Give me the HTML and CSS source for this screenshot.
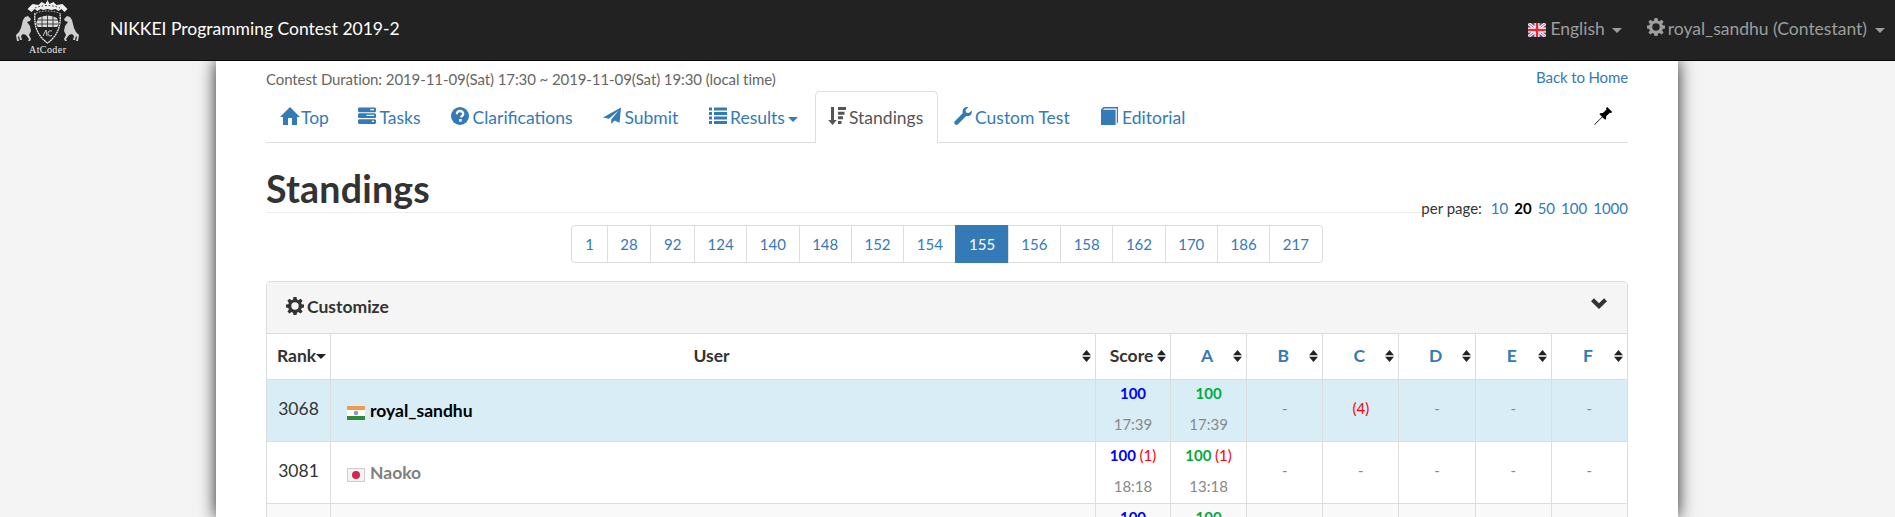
FILE: index.html
```html
<!DOCTYPE html>
<html lang="en">
<head>
<meta charset="utf-8">
<title>Standings - NIKKEI Programming Contest 2019-2</title>
<link rel="stylesheet" href="styles.css">
</head>
<body>
<svg class="sprite" aria-hidden="true">
  <symbol id="cog" viewBox="0 0 18 18"><path fill-rule="evenodd" d="M7.5 0h3l.5 2.6 1.3.6L14.600 1.700l2 2-1.500 2.200.6 1.300 2.300.4v3l-2.300.5-.6 1.300 1.500 2.200-2 2-2.300-1.500-1.300.6-.5 2.300h-3L7 15.700l-1.300-.6-2.300 1.500-2-2 1.500-2.200-.6-1.300L0 10.600v-3l2.300-.4.6-1.300-1.500-2.200 2-2 2.300 1.500L7 2.600zM9 5.300a3.700 3.700 0 1 0 0 7.400a3.700 3.700 0 0 0 0-7.400z"/></symbol>
  <symbol id="home" viewBox="0 0 20 18"><path d="M10 0 20 10h-3v8h-5v-7H8v7H3v-8H0z"/></symbol>
  <symbol id="tasks" viewBox="0 0 19 18"><path fill-rule="evenodd" d="M1 0h17l1 1v3l-1 1H1L0 4V1zM13 1.500v1.300h4V1.500zM1 6.200h17l1 1v3l-1 1H1l-1-1v-3zM9 7.800v1.300h8V7.800zM1 12.400h17l1 1v3l-1 1H1l-1-1v-3zM14.500 14v1.300H17V14z"/></symbol>
  <symbol id="question" viewBox="0 0 18 18"><circle cx="9" cy="9" r="9"/><path d="M5.900 7.300C5.800 4.900 7 4 9 4s3.300 1.100 3.200 2.900c0 1.900-2 2-2.100 3.500" fill="none" stroke="#fff" stroke-width="2.300"/><path d="M8 12h2.700v2.600H8z" fill="#fff"/></symbol>
  <symbol id="send" viewBox="0 0 19 18"><path d="M19 0 17.500 16l-5.300-2.300L8.700 17.500v-4.700L16.500 3.300 6.300 12 0 10.500z"/></symbol>
  <symbol id="list" viewBox="0 0 18 18"><path d="M0 .5h3v3H0zM0 5h3v3H0zM0 9.500h3v3H0zM0 14h3v3H0zM5 .5h13v3H5zM5 5h13v3H5zM5 9.500h13v3H5zM5 14h13v3H5z"/></symbol>
  <symbol id="sort" viewBox="0 0 18 18"><path d="M3 0h3v13h2.800L4.500 18 .2 13H3zM10 0h8v3h-8zM10 4.700h6.500v3H10zM10 9.300h5v3h-5zM10 14h3.500v3H10z"/></symbol>
  <symbol id="wrench" viewBox="0 0 18 18"><path d="M17.800 3.800c.6 3.800-2 6-5.600 5.200L4 17.300c-1.800 2-5-.9-3.200-3L8.700 6.200C7.900 2.300 10.400-.6 14.300.2L11.600 3l.4 2.500 2.700.6z"/></symbol>
  <symbol id="book" viewBox="0 0 18 18"><path d="M2.500 0H17v15.500l-1.200 1V1.500H3L2 2.800h12.600V18H0V2.500z"/></symbol>
  <symbol id="pin" viewBox="0 0 18 18"><path d="m13.200 0 5 5-1.100 1.100-1.300-.4-3.700 3.600c.4 1.500.1 2.500-.9 3.500L8.300 10.200 1.200 17.500.2 18l.5-1.100L8 9.800 5.300 7c1-1 2.200-1.200 3.600-.9L12.500 2.500l-.5-1.300z"/></symbol>
  <symbol id="down" viewBox="0 0 16 11"><path d="M0 3.300 3 .3l5 4.900 5-4.900 3 3L8 11z"/></symbol>
  <symbol id="updown" viewBox="0 0 9 12"><path d="M4.500 0 9 5.300H0zM0 6.800h9L4.500 12z"/></symbol>
  <symbol id="horse" viewBox="0 0 17 27"><path d="m12 1 3 3-1 2-3 1 3 4 1 5-2 4 2 4-1 2h-2l1-2-3-4-3-1-2 2 1 4H4l-1-4-1 1 1 4H1l-1-6 3-3 2-4 1-4 1-4 2-3z"/></symbol>
</svg>

<header class="navbar">
  <svg class="logo" viewBox="0 0 64 54">
    <g fill="#eee">
      <path d="m31.500 0 2 4 4-2 3 3 6-1 5 5-3 3-3-3-3 2-3-2-4 1-4-1-4 1-3-1-3 2-3-2-3 3-4-3 5-5 6 1 3-3 4 2z"/>
      <use href="#horse" x="0" y="15" width="17" height="27" opacity=".85"/>
      <use href="#horse" transform="matrix(-1 0 0 1 63 15)" width="17" height="27" opacity=".85"/>
      <path d="M22 18q9.500-5 19 0l2 6-2 3H22l-2-3z" opacity=".9"/>
    </g>
    <path d="M19 13q-2 20 12.500 30Q46 33 44 13" fill="none" stroke="#eee" stroke-width="1.300" stroke-dasharray="2 .5"/>
    <path d="M19 8q12.500-5 25 0" fill="none" stroke="#222" stroke-dasharray="1.500 2"/>
    <path d="M20 13q11.500-4 23 0" fill="none" stroke="#ccc" stroke-dasharray="1.500 1.500"/>
    <path d="M26 15v12M31.500 14v13M37 15v12M20 20h24M20 24h24" stroke="#222" stroke-width=".8"/>
    <path d="m27 36 3-6 1 6m5-5q-4-1-4 2.500t4 2" fill="none" stroke="#ccc"/>
    <text x="13" y="53" textLength="37" lengthAdjust="spacing">AtCoder</text>
  </svg>
  <a class="contest">NIKKEI Programming Contest 2019-2</a>
  <nav class="account">
    <a class="lang"><svg class="flag" viewBox="0 0 18 14"><path fill="#3855a5" d="M0 0h18v14H0z"/><path d="m0 0 18 14M18 0 0 14" stroke="#fff" stroke-width="3"/><path d="m0 0 18 14M18 0 0 14" stroke="#e04848" stroke-width="1"/><path d="M9 0v14M0 7h18" stroke="#fff" stroke-width="5"/><path d="M9 0v14M0 7h18" stroke="#e02b36" stroke-width="2.600"/></svg>English<i class="caret"></i></a>
    <a class="who"><svg class="icon"><use href="#cog"/></svg>royal_sandhu (Contestant)<i class="caret"></i></a>
  </nav>
</header>

<main class="page">
  <div class="meta"><span class="duration">Contest Duration: 2019-11-09(Sat) 17:30 ~ 2019-11-09(Sat) 19:30 (local time)</span><a class="back">Back to Home</a></div>
  <nav class="tabs">
    <a class="tab top"><svg class="icon home"><use href="#home"/></svg>Top</a>
    <a class="tab tasks"><svg class="icon"><use href="#tasks"/></svg>Tasks</a>
    <a class="tab clar"><svg class="icon"><use href="#question"/></svg>Clarifications</a>
    <a class="tab submit"><svg class="icon"><use href="#send"/></svg>Submit</a>
    <a class="tab results"><svg class="icon"><use href="#list"/></svg>Results<i class="caret"></i></a>
    <a class="tab active"><svg class="icon"><use href="#sort"/></svg>Standings</a>
    <a class="tab custom"><svg class="icon"><use href="#wrench"/></svg>Custom Test</a>
    <a class="tab editorial"><svg class="icon"><use href="#book"/></svg>Editorial</a>
    <svg class="icon pin"><use href="#pin"/></svg>
  </nav>
  <div class="heading"><h2>Standings</h2><div class="per"><span>per page:</span><a>10</a><b>20</b><a>50</a><a>100</a><a>1000</a></div></div>
  <div class="pages"><a>1</a><a>28</a><a>92</a><a>124</a><a>140</a><a>148</a><a>152</a><a>154</a><a class="current">155</a><a>156</a><a>158</a><a>162</a><a>170</a><a>186</a><a>217</a></div>
  <section class="panel">
    <div class="customize"><svg class="icon"><use href="#cog"/></svg><span>Customize</span><svg class="chev"><use href="#down"/></svg></div>
    <table>
      <colgroup><col class="c-rank"><col class="c-user"><col class="c-score"><col class="c-task"><col class="c-task"><col class="c-task"><col class="c-task"><col class="c-task"><col class="c-task"></colgroup>
      <thead><tr>
        <th><div class="th rank">Rank<i class="caret"></i></div></th>
        <th><div class="th"><span>User</span><svg><use href="#updown"/></svg></div></th>
        <th><div class="th"><span>Score</span><svg><use href="#updown"/></svg></div></th>
        <th><div class="th"><a>A</a><svg><use href="#updown"/></svg></div></th>
        <th><div class="th"><a>B</a><svg><use href="#updown"/></svg></div></th>
        <th><div class="th"><a>C</a><svg><use href="#updown"/></svg></div></th>
        <th><div class="th"><a>D</a><svg><use href="#updown"/></svg></div></th>
        <th><div class="th"><a>E</a><svg><use href="#updown"/></svg></div></th>
        <th><div class="th"><a>F</a><svg><use href="#updown"/></svg></div></th>
      </tr></thead>
      <tbody>
        <tr class="me"><td class="num">3068</td><td class="user"><svg class="flag" viewBox="0 0 18 14"><path fill="#fff" d="M0 0h18v14H0z"/><path fill="#f29a4a" d="M0 0h18v4H0z"/><path fill="#2f8a35" d="M0 10h18v4H0z"/><circle cx="9" cy="7" r="2.200" fill="#8f93d0"/></svg>royal_sandhu</td>
          <td><p class="pt total">100</p><p>17:39</p></td><td><p class="pt ac">100</p><p>17:39</p></td><td class="mid">-</td><td class="mid wa">(4)</td><td class="mid">-</td><td class="mid">-</td><td class="mid">-</td></tr>
        <tr><td class="num">3081</td><td class="user gray"><svg class="flag" viewBox="0 0 18 14"><path fill="#f3f3f3" stroke="#ccc" d="M.5.500h17v13H.5z"/><circle cx="9" cy="7" r="4" fill="#d0284d"/></svg>Naoko</td>
          <td><p class="pt total">100 <span class="wa">(1)</span></p><p>18:18</p></td><td><p class="pt ac">100 <span class="wa">(1)</span></p><p>13:18</p></td><td class="mid">-</td><td class="mid">-</td><td class="mid">-</td><td class="mid">-</td><td class="mid">-</td></tr>
        <tr class="odd"><td></td><td></td><td><p class="pt total">100</p><p></p></td><td><p class="pt ac">100</p><p></p></td><td></td><td></td><td></td><td></td><td></td></tr>
      </tbody>
    </table>
  </section>
</main>
</body>
</html>
```
FILE: styles.css
```css
* { box-sizing: border-box; }
html, body { margin: 0; height: 517px; overflow: hidden; }
body { background: #f4f4f4; color: #333; font: 17.5px/25px Lato, sans-serif; }
a { color: #337ab7; }
p { margin: 0; }
.sprite { position: absolute; width: 0; height: 0; }
.icon { width: 18px; height: 18px; fill: currentColor; flex: none; }
.caret { border: 5px solid transparent; border-top-color: currentColor; border-bottom: 0; flex: none; }

.navbar { position: relative; z-index: 1; display: flex; height: 61px; background: #222; border-bottom: 1px solid #080808; padding: 0 10px 0 16px; }
.logo { width: 64px; height: 54px; }
.logo text { font: 10px "Liberation Serif", serif; fill: #eee; }
.contest { color: #fff; margin: 16px auto 0 30px; white-space: nowrap; }
.account { display: flex; padding-top: 16px; }
.account a { display: flex; color: #9d9d9d; white-space: nowrap; }
.account .caret { margin: 12px 0 0 8px; }
.lang .caret { margin-left: 7px; }
.flag { width: 18px; height: 14px; flex: none; }
.lang .flag { margin: 7px 4px 0 0; }
.who { margin-left: 25px; }
.who .icon { margin: 2px 3px 0 0; }

.page { width: 1462px; height: 456px; margin: 0 auto 0 216px; padding: 0 50px; background: #fff; box-shadow: 0 0 16px #222; overflow: hidden; }
.meta { display: flex; justify-content: space-between; height: 30px; font-size: 15px; line-height: 18px; color: #666; padding-top: 9px; }
.duration { letter-spacing: -.09px; }
.back { margin-top: -2px; letter-spacing: -.12px; }

.tabs { display: flex; height: 52px; border-bottom: 1px solid #ddd; }
.tab { display: flex; flex: none; height: 52px; padding: 13px 0 0 12.500px; border: 1px solid transparent; border-radius: 5px 5px 0 0; white-space: nowrap; }
.tab .icon { margin: 2px 3.500px 0 0; }
.tab .home { width: 20px; margin-right: 1.500px; }
.tab .caret { margin: 12px 0 0 3px; }
.top { width: 78.500px; }
.tasks { width: 93px; }
.clar { width: 152px; }
.submit { width: 105.500px; }
.results { width: 120px; }
.active { width: 123px; margin-right: 2px; padding-left: 12px; background: #fff; color: #555; border-color: #ddd; border-bottom-color: #fff; }
.active .icon { margin-right: 3px; }
.custom { width: 147px; }
.pin { margin: 16px 16px 0 auto; color: #000; }

.heading { display: flex; justify-content: space-between; height: 70px; border-bottom: 1px solid #eee; }
h2 { margin: 25px 0 0; font-size: 37.5px; line-height: 41px; letter-spacing: .2px; }
.per { display: flex; height: 24px; margin-top: 53px; background: #fff; font-size: 15px; line-height: 24px; gap: 6px; }
.per span { margin-right: 3px; }
.per b { color: #000; }

.pages { display: flex; width: max-content; height: 38px; margin: 12px auto 0; border: 1px solid #ddd; border-radius: 4px; font-size: 15px; line-height: 36px; }
.pages a { padding: 0 12.600px; border-left: 1px solid #ddd; }
.pages a:first-child { border-left: 0; padding: 0 12.800px; }
.pages .current { background: #337ab7; color: #fff; margin: -1px 0; line-height: 38px; border-color: #337ab7; }

.panel { margin-top: 18px; border: 1px solid #ddd; border-bottom: 0; border-radius: 5px 5px 0 0; }
.customize { display: flex; height: 51px; padding: 12px 19px 0; background: #f5f5f5; border-radius: 4px 4px 0 0; font-weight: bold; }
.customize .icon { margin: 3px 3px 0 0; }
.chev { width: 16px; height: 11px; margin: 4px 1px 0 auto; fill: #333; }
table { width: 1362px; margin-left: -1px; table-layout: fixed; border-collapse: collapse; }
.c-rank { width: 64px; }
.c-user { width: 765px; }
.c-score { width: 75px; }
th, td { padding: 0; border: 1px solid #ddd; text-align: center; }
th { height: 46px; }
.th { display: flex; align-items: center; padding: 0 4px 2px 2px; }
.th > span, .th > a { flex: 1; padding-left: 7px; margin-right: -1px; }
.th svg { width: 9px; height: 12px; margin-top: 1px; fill: #222; flex: none; }
th:nth-child(3) .th > span { padding-left: 4px; margin-right: -4px; }
.th.rank { padding: 0 0 2px 10px; }
.rank .caret { color: #222; margin-top: 2px; }
td { height: 62px; font-size: 15px; color: #888; line-height: 25px; }
td p { height: 30px; padding-top: 1px; }
td .pt { height: 31px; }
.mid { padding-bottom: 4px; }
.num { font-size: 17.5px; color: #333; padding-bottom: 5px; }
.user { font-size: 17.5px; font-weight: bold; color: #000; text-align: left; padding: 0 0 0 16px; }
.user .flag { margin-right: 5px; vertical-align: -3px; }
.gray { color: #808080; }
.me { background: #d9edf7; }
.odd { background: #f9f9f9; }
.pt { font-weight: bold; }
.total { color: #00f; }
.ac { color: #00aa3e; }
.wa { color: #f00; font-weight: normal; }
```
